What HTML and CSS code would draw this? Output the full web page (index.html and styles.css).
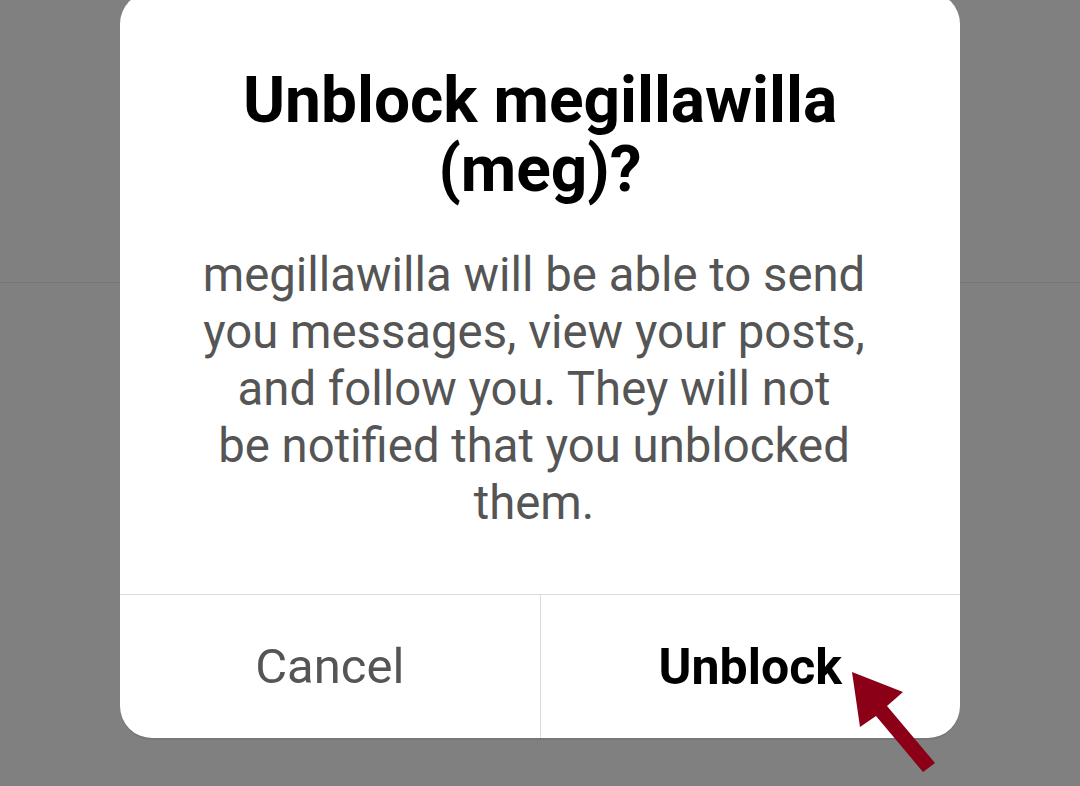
FILE: index.html
```html
<!DOCTYPE html>
<html lang="en">
<head>
<meta charset="utf-8">
<title>Unblock</title>
<link rel="stylesheet" href="styles.css">
</head>
<body>
<div class="page">
  <div class="page-top"></div>
  <div class="page-rest"></div>
</div>
<div class="dialog">
  <div class="dialog-body">
    <h1 class="dialog-title">Unblock megillawilla<br>(meg)?</h1>
    <p class="dialog-text">megillawilla will be able to send<br>you messages, view your posts,<br>and follow you. They will not<br>be notified that you unblocked<br>them.</p>
  </div>
  <div class="dialog-actions">
    <div class="btn btn-cancel">Cancel</div>
    <div class="btn btn-confirm">Unblock</div>
  </div>
</div>
<svg class="arrow" width="110" height="120" viewBox="840 660 110 120" xmlns="http://www.w3.org/2000/svg">
  <polygon points="852,672 903,692 887,706 935,763 923,772 876,716 860,727" fill="#8b0016"/>
</svg>
</body>
</html>
```
FILE: styles.css
```css
html, body {
  margin: 0;
  padding: 0;
}
body {
  width: 1080px;
  height: 786px;
  overflow: hidden;
  background: #808080;
  position: relative;
  font-family: Roboto, "Liberation Sans", sans-serif;
}
.page-top {
  height: 282px;
  border-bottom: 1px solid #767676;
}
.dialog {
  position: absolute;
  left: 120px;
  top: -8px;
  width: 840px;
  height: 746px;
  background: #fff;
  border-radius: 32px;
  display: flex;
  flex-direction: column;
  box-shadow: 0 2px 0 rgba(0,0,0,0.07);
}
.dialog-body {
  flex: 1;
  padding-top: 74px;
  text-align: center;
}
.dialog-title {
  margin: 0;
  font-weight: 700;
  font-size: 64px;
  line-height: 69px;
  color: #000;
}
.dialog-text {
  margin: 43px 0 0;
  padding-right: 12px;
  font-size: 47.3px;
  line-height: 57px;
  color: #555;
  font-weight: 400;
}
.dialog-actions {
  height: 143px;
  border-top: 1px solid #dbdbdb;
  display: flex;
}
.btn {
  flex: 1;
  display: flex;
  align-items: center;
  justify-content: center;
  font-size: 49px;
}
.btn-cancel {
  color: #555;
  border-right: 1px solid #dbdbdb;
}
.btn-confirm {
  color: #000;
  font-weight: 700;
  font-size: 50px;
}
.arrow {
  position: absolute;
  left: 840px;
  top: 660px;
}
```
